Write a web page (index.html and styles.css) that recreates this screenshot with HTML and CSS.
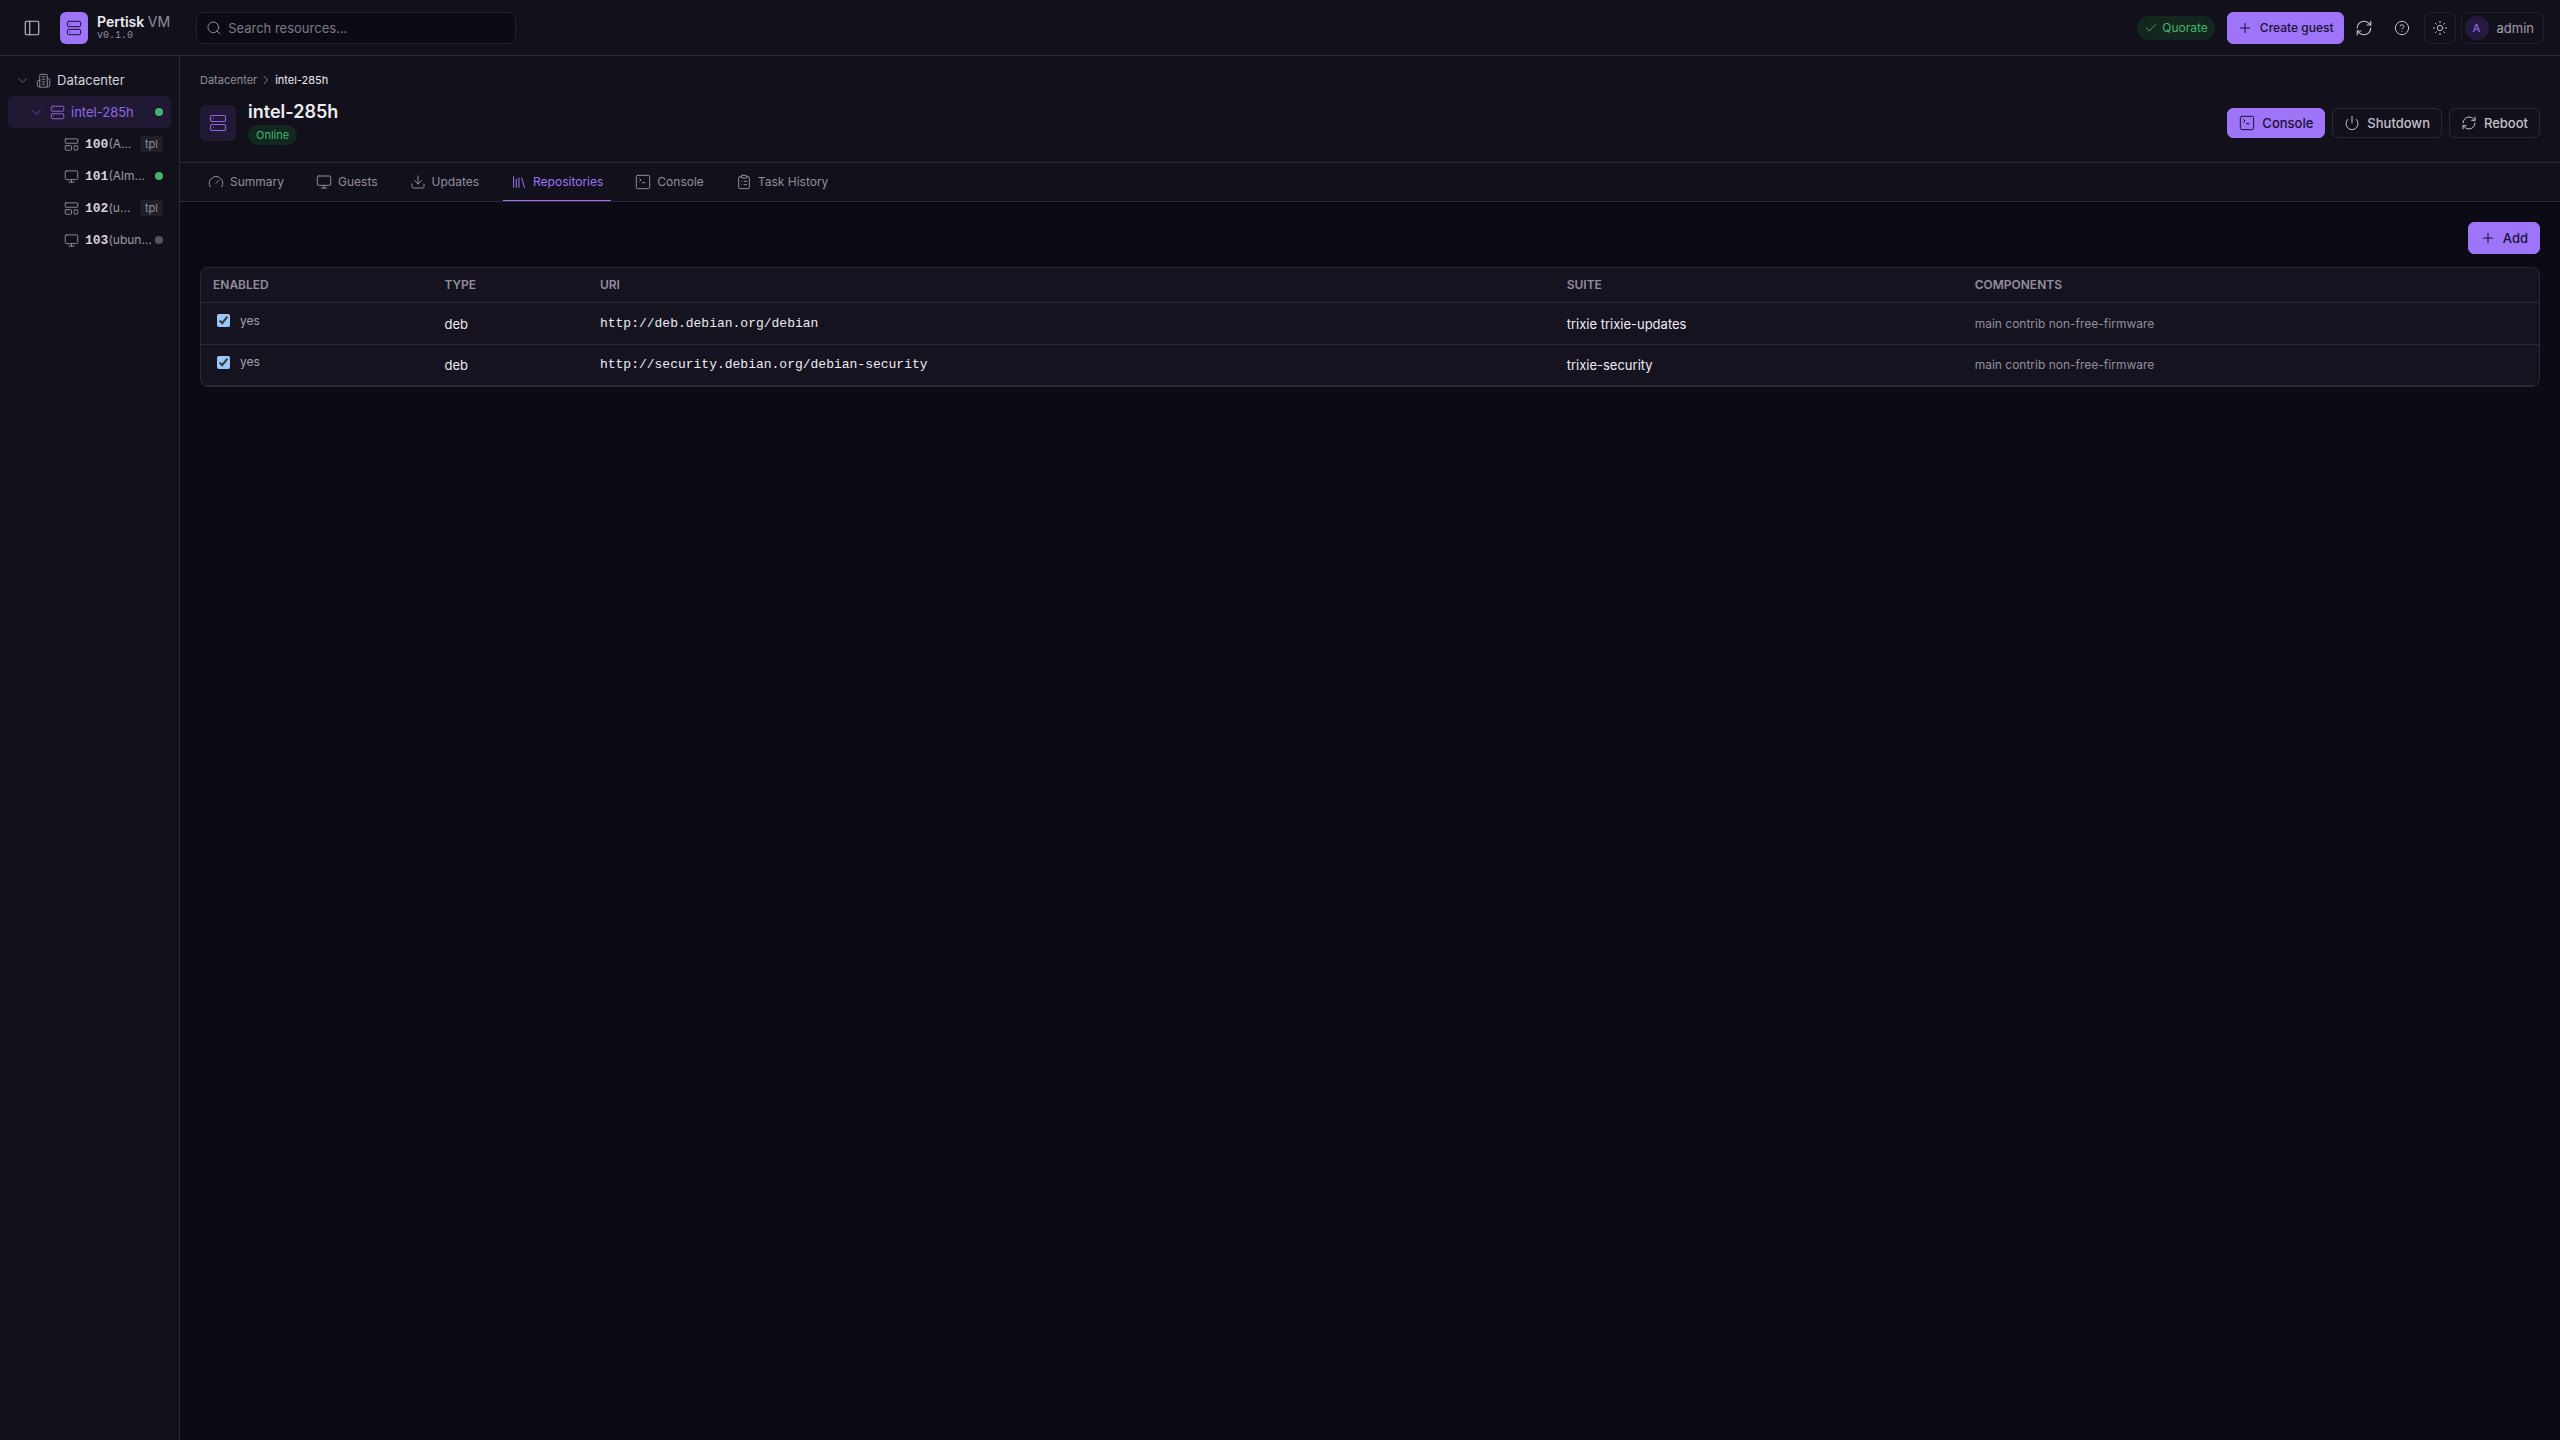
FILE: index.html
```html
<!DOCTYPE html>
<html lang="en">
<head>
<meta charset="utf-8">
<meta name="viewport" content="width=device-width, initial-scale=1">
<title>intel-285h – Pertisk VM</title>
<link rel="stylesheet" href="styles.css">
</head>
<body>
<svg class="sprite" aria-hidden="true">
  <symbol id="panel" viewBox="0 0 24 24"><rect x="3" y="3" width="18" height="18" rx="2"/><path d="M9 3v18"/></symbol>
  <symbol id="server" viewBox="0 0 24 24"><rect x="2" y="2" width="20" height="8" rx="2"/><rect x="2" y="14" width="20" height="8" rx="2"/><path d="M6 6h.01M6 18h.01"/></symbol>
  <symbol id="search" viewBox="0 0 24 24"><circle cx="11" cy="11" r="8"/><path d="m21 21-4.3-4.3"/></symbol>
  <symbol id="check" viewBox="0 0 24 24"><path d="M20 6 9 17l-5-5"/></symbol>
  <symbol id="plus" viewBox="0 0 24 24"><path d="M5 12h14M12 5v14"/></symbol>
  <symbol id="refresh" viewBox="0 0 24 24"><path d="M3 12a9 9 0 0 1 9-9 9.75 9.75 0 0 1 6.74 2.74L21 8"/><path d="M21 3v5h-5"/><path d="M21 12a9 9 0 0 1-9 9 9.75 9.75 0 0 1-6.74-2.74L3 16"/><path d="M8 16H3v5"/></symbol>
  <symbol id="help" viewBox="0 0 24 24"><circle cx="12" cy="12" r="10"/><path d="M9.09 9a3 3 0 0 1 5.83 1c0 2-3 3-3 3M12 17h.01"/></symbol>
  <symbol id="sun" viewBox="0 0 24 24"><circle cx="12" cy="12" r="4"/><path d="M12 2v2M12 20v2M4.93 4.93l1.41 1.41M17.66 17.66l1.41 1.41M2 12h2M20 12h2M6.34 17.66l-1.41 1.41M19.07 4.93l-1.41 1.41"/></symbol>
  <symbol id="down" viewBox="0 0 24 24"><path d="m6 9 6 6 6-6"/></symbol>
  <symbol id="right" viewBox="0 0 24 24"><path d="m9 18 6-6-6-6"/></symbol>
  <symbol id="building" viewBox="0 0 24 24"><path d="M6 22V4a2 2 0 0 1 2-2h8a2 2 0 0 1 2 2v18Z"/><path d="M6 12H4a2 2 0 0 0-2 2v6a2 2 0 0 0 2 2h2M18 9h2a2 2 0 0 1 2 2v9a2 2 0 0 1-2 2h-2M10 6h4M10 10h4M10 14h4M10 18h4"/></symbol>
  <symbol id="template" viewBox="0 0 24 24"><rect x="2" y="3" width="20" height="7" rx="1"/><rect x="2" y="14" width="10" height="7" rx="1"/><rect x="16" y="14" width="6" height="7" rx="1"/></symbol>
  <symbol id="monitor" viewBox="0 0 24 24"><rect x="2" y="3" width="20" height="14" rx="2"/><path d="M8 21h8M12 17v4"/></symbol>
  <symbol id="gauge" viewBox="0 0 24 24"><path d="m12 14 4-4M3.34 19a10 10 0 1 1 17.32 0"/></symbol>
  <symbol id="download" viewBox="0 0 24 24"><path d="M21 15v4a2 2 0 0 1-2 2H5a2 2 0 0 1-2-2v-4M7 10l5 5 5-5M12 15V3"/></symbol>
  <symbol id="library" viewBox="0 0 24 24"><path d="m16 6 4 14M12 6v14M8 8v12M4 4v16"/></symbol>
  <symbol id="terminal" viewBox="0 0 24 24"><rect x="2" y="2" width="20" height="20" rx="2"/><path d="m7 11 2-2-2-2M11 13h4"/></symbol>
  <symbol id="clipboard" viewBox="0 0 24 24"><rect x="8" y="2" width="8" height="4" rx="1"/><path d="M16 4h2a2 2 0 0 1 2 2v14a2 2 0 0 1-2 2H6a2 2 0 0 1-2-2V6a2 2 0 0 1 2-2h2M12 11h4M12 16h4M8 11h.01M8 16h.01"/></symbol>
  <symbol id="power" viewBox="0 0 24 24"><path d="M12 2v10M18.4 6.6a9 9 0 1 1-12.77.04"/></symbol>
</svg>

<header class="topbar">
  <button class="icon-btn panel-toggle" type="button" aria-label="Toggle sidebar"><svg class="icon icon-lg"><use href="#panel"/></svg></button>
  <a class="brand" href="#">
    <span class="logo"><svg class="icon"><use href="#server"/></svg></span>
    <span class="brand-text"><span class="brand-name">Pertisk <span class="brand-suffix">VM</span></span><span class="version">v0.1.0</span></span>
  </a>
  <label class="search"><svg class="icon"><use href="#search"/></svg><input type="search" placeholder="Search resources…" aria-label="Search resources"></label>
  <div class="actions">
    <span class="quorum"><svg class="icon icon-sm"><use href="#check"/></svg>Quorate</span>
    <button class="btn primary create" type="button"><svg class="icon"><use href="#plus"/></svg>Create guest</button>
    <button class="icon-btn refresh" type="button" aria-label="Refresh"><svg class="icon icon-lg"><use href="#refresh"/></svg></button>
    <button class="icon-btn help" type="button" aria-label="Help"><svg class="icon"><use href="#help"/></svg></button>
    <button class="icon-btn outlined" type="button" aria-label="Theme"><svg class="icon"><use href="#sun"/></svg></button>
    <button class="user" type="button"><span class="avatar">A</span>admin</button>
  </div>
</header>

<div class="shell">
  <nav class="sidebar" aria-label="Resources">
    <a class="node root" href="#"><svg class="icon icon-sm chev"><use href="#down"/></svg><svg class="icon"><use href="#building"/></svg><span class="label">Datacenter</span></a>
    <a class="node host active" href="#"><svg class="icon icon-sm chev"><use href="#down"/></svg><svg class="icon"><use href="#server"/></svg><span class="label">intel-285h</span><span class="dot on"></span></a>
    <a class="node guest" href="#"><svg class="icon"><use href="#template"/></svg><span class="label"><b>100</b>(A…</span><span class="tpl">tpl</span></a>
    <a class="node guest" href="#"><svg class="icon"><use href="#monitor"/></svg><span class="label"><b>101</b>(Alm…</span><span class="dot on"></span></a>
    <a class="node guest" href="#"><svg class="icon"><use href="#template"/></svg><span class="label"><b>102</b>(u…</span><span class="tpl">tpl</span></a>
    <a class="node guest" href="#"><svg class="icon"><use href="#monitor"/></svg><span class="label"><b>103</b>(ubun…</span><span class="dot"></span></a>
  </nav>

  <main class="main">
    <section class="page-head">
      <nav class="crumbs" aria-label="Breadcrumb"><a href="#">Datacenter</a><svg class="icon icon-sm"><use href="#right"/></svg><span>intel-285h</span></nav>
      <div class="title-row">
        <span class="host-icon"><svg class="icon icon-lg"><use href="#server"/></svg></span>
        <div class="title-text"><h1>intel-285h</h1><span class="status">Online</span></div>
        <div class="host-actions">
          <button class="btn primary" type="button"><svg class="icon"><use href="#terminal"/></svg>Console</button>
          <button class="btn" type="button"><svg class="icon"><use href="#power"/></svg>Shutdown</button>
          <button class="btn" type="button"><svg class="icon"><use href="#refresh"/></svg>Reboot</button>
        </div>
      </div>
    </section>
    <nav class="tabs" aria-label="Host sections">
      <a href="#"><svg class="icon"><use href="#gauge"/></svg>Summary</a>
      <a href="#"><svg class="icon"><use href="#monitor"/></svg>Guests</a>
      <a href="#"><svg class="icon"><use href="#download"/></svg>Updates</a>
      <a class="current" href="#"><svg class="icon"><use href="#library"/></svg>Repositories</a>
      <a href="#"><svg class="icon"><use href="#terminal"/></svg>Console</a>
      <a href="#"><svg class="icon"><use href="#clipboard"/></svg>Task History</a>
    </nav>
    <section class="content">
      <button class="btn primary add" type="button"><svg class="icon"><use href="#plus"/></svg>Add</button>
      <div class="card">
        <table>
          <colgroup><col class="c-enabled"><col class="c-type"><col class="c-uri"><col class="c-suite"><col class="c-comp"></colgroup>
          <thead><tr><th>Enabled</th><th>Type</th><th>URI</th><th>Suite</th><th>Components</th></tr></thead>
          <tbody>
            <tr><td class="toggle"><label><input type="checkbox" checked>yes</label></td><td>deb</td><td class="mono">http://deb.debian.org/debian</td><td>trixie trixie-updates</td><td class="muted">main contrib non-free-firmware</td></tr>
            <tr><td class="toggle"><label><input type="checkbox" checked>yes</label></td><td>deb</td><td class="mono">http://security.debian.org/debian-security</td><td>trixie-security</td><td class="muted">main contrib non-free-firmware</td></tr>
          </tbody>
        </table>
      </div>
    </section>
  </main>
</div>
</body>
</html>
```
FILE: styles.css
```css
:root {
  --bg: #0c0a15;
  --surface: #12101b;
  --card: #161320;
  --line: #2b2934;
  --line-soft: #22202b;
  --text: #edecf2;
  --soft: #c3c1ca;
  --muted: #918e9b;
  --accent: #9e75f8;
  --green: #43b36f;
  --sans: Inter, "Liberation Sans", sans-serif;
  --mono: "Liberation Mono", monospace;
}

* { box-sizing: border-box; }

body {
  margin: 0;
  min-height: 100vh;
  display: flex;
  flex-direction: column;
  background: var(--bg);
  color: var(--text);
  font: 13px/20px var(--sans);
}

a { color: inherit; text-decoration: none; }

button, input { font: inherit; color: inherit; }

button {
  margin: 0;
  padding: 0;
  border: 1px solid transparent;
  background: none;
  cursor: pointer;
}

.sprite { position: absolute; width: 0; height: 0; }

.icon {
  width: 16px;
  height: 16px;
  flex: none;
  fill: none;
  stroke: currentColor;
  stroke-width: 1.5;
  stroke-linecap: round;
  stroke-linejoin: round;
}
.icon-sm { width: 14px; height: 14px; }
.icon-lg { width: 18px; height: 18px; }

/* Top bar */
.topbar {
  display: flex;
  align-items: center;
  height: 56px;
  padding: 0 16px;
  background: var(--surface);
  border-bottom: 1px solid var(--line);
}

.icon-btn {
  display: flex;
  align-items: center;
  justify-content: center;
  width: 32px;
  height: 32px;
  border-radius: 6px;
  color: var(--soft);
}
.outlined { border-color: var(--line-soft); }

.brand { display: flex; align-items: center; gap: 9px; margin-left: 12px; }
.logo {
  display: flex;
  align-items: center;
  justify-content: center;
  width: 28px;
  height: 32px;
  border-radius: 6px;
  background: var(--accent);
  color: #1b1036;
}
.brand-text { display: flex; flex-direction: column; }
.brand-name { font-size: 14px; line-height: 16px; font-weight: 600; }
.brand-suffix { font-weight: 400; color: var(--muted); }
.version { font: 10px/12px var(--mono); color: var(--muted); }

.search {
  display: flex;
  align-items: center;
  gap: 6px;
  width: 320px;
  height: 32px;
  margin-left: 26px;
  padding: 0 9px;
  border: 1px solid var(--line-soft);
  border-radius: 6px;
  background: var(--bg);
  color: var(--muted);
}
.search input {
  flex: 1;
  min-width: 0;
  padding: 0;
  border: 0;
  outline: 0;
  background: none;
}
.search input::placeholder { color: #7d7a87; opacity: 1; }

.actions { display: flex; align-items: center; margin-left: auto; }
.quorum {
  display: flex;
  align-items: center;
  gap: 4px;
  height: 24px;
  margin-right: 12px;
  padding: 0 7px;
  border-radius: 12px;
  background: #14271f;
  color: var(--green);
  font-size: 12px;
}
.refresh { margin: 0 6px 0 4px; }
.help { margin-right: 6px; }
.user {
  display: flex;
  align-items: center;
  gap: 8px;
  height: 32px;
  margin-left: 5px;
  padding: 0 9px 0 3px;
  border: 1px solid var(--line-soft);
  border-radius: 6px;
  color: #a3a0ad;
}
.avatar {
  width: 24px;
  height: 24px;
  border-radius: 50%;
  background: #25193f;
  color: #7f5dcb;
  font-size: 11px;
  line-height: 24px;
  font-weight: 600;
  text-align: center;
}

.btn {
  display: flex;
  align-items: center;
  gap: 7px;
  height: 30px;
  padding: 0 11px;
  border: 1px solid var(--line);
  border-radius: 6px;
  color: var(--soft);
  font-weight: 500;
}
.primary { border-color: var(--accent); background: var(--accent); color: #1b1036; }
.create { height: 32px; padding: 0 9px; font-size: 12px; }

/* Resource tree */
.shell { display: flex; flex: 1; }
.sidebar {
  flex: none;
  width: 180px;
  padding: 8px;
  background: var(--surface);
  border-right: 1px solid var(--line);
}
.node {
  display: flex;
  align-items: center;
  gap: 6px;
  height: 32px;
  padding: 0 8px 0 7px;
  border-radius: 6px;
  color: var(--muted);
}
.node .icon { width: 15px; height: 15px; }
.node .label { flex: 1; min-width: 0; white-space: nowrap; }
.node.root .label { color: #d5d3dc; }
.node.host { padding-left: 21px; }
.node.guest { padding-left: 56px; }
.node.guest .label { color: #9d9aa6; font-size: 12px; }
.node.active { background: #211934; color: #8e68e4; }
.chev { opacity: .7; }
.node b { font: 600 13px/20px var(--mono); color: #d5d3dc; }
.dot { flex: none; width: 8px; height: 8px; border-radius: 50%; background: #55525d; }
.dot.on { background: var(--green); }
.tpl {
  padding: 0 5px;
  border-radius: 4px;
  background: #201e29;
  font-size: 11px;
  line-height: 16px;
}

/* Host page */
.main { flex: 1; min-width: 0; }
.page-head {
  padding: 15px 20px 17px;
  background: var(--surface);
  border-bottom: 1px solid var(--line);
}
.crumbs {
  display: flex;
  align-items: center;
  gap: 2px;
  font-size: 11px;
  line-height: 18px;
  color: var(--muted);
}
.crumbs span { color: var(--text); }
.title-row { display: flex; align-items: center; gap: 12px; margin-top: 12px; }
.host-icon {
  display: flex;
  align-items: center;
  justify-content: center;
  width: 36px;
  height: 36px;
  border-radius: 6px;
  background: #211934;
  color: #8e68e4;
}
.title-text { display: flex; flex-direction: column; align-items: flex-start; gap: 2px; }
h1 { margin: 0; font-size: 18px; line-height: 22px; font-weight: 600; }
.status {
  padding: 0 8px;
  border-radius: 10px;
  background: #112720;
  color: var(--green);
  font-size: 11px;
  line-height: 20px;
}
.host-actions { display: flex; gap: 7px; margin-left: auto; }

.tabs {
  display: flex;
  gap: 16px;
  padding: 0 20px;
  background: var(--surface);
  border-bottom: 1px solid var(--line);
}
.tabs a {
  display: flex;
  align-items: center;
  gap: 6px;
  height: 38px;
  padding: 0 8px;
  border-bottom: 1px solid transparent;
  color: var(--muted);
  font-size: 12px;
}
.tabs .current { border-color: var(--accent); color: var(--accent); }

.content { padding: 20px; }
.add { height: 32px; margin: 0 0 13px auto; }
.card {
  overflow: hidden;
  border: 1px solid var(--line);
  border-radius: 8px;
  background: var(--card);
}
table { width: 100%; border-collapse: separate; border-spacing: 0; table-layout: fixed; }
.c-enabled { width: 9.9%; }
.c-type { width: 6.65%; }
.c-uri { width: 41.35%; }
.c-suite { width: 17.45%; }
.c-comp { width: 24.65%; }
th, td { padding: 0 12px; border-bottom: 1px solid var(--line); text-align: left; }
th {
  height: 35px;
  color: var(--muted);
  font-size: 12px;
  font-weight: 600;
  text-transform: uppercase;
}
td { height: 42px; }
tr:last-child td { height: 41px; }
td.toggle { padding-bottom: 6px; }
.toggle label { display: flex; align-items: center; gap: 10px; color: #a3a0ad; font-size: 12px; }
.toggle input {
  width: 13px;
  height: 13px;
  margin: 0 0 0 4px;
  color-scheme: dark;
}
.mono { font-family: var(--mono); }
.muted { color: var(--muted); font-size: 12px; }
```
